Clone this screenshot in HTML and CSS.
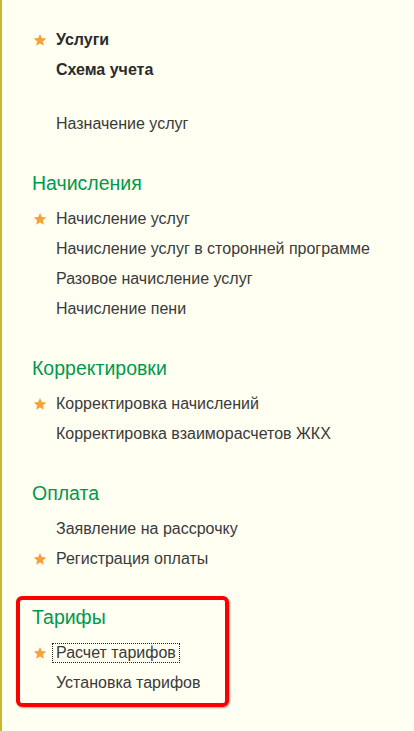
FILE: index.html
```html
<!DOCTYPE html>
<html lang="ru">
  <head>
    <meta charset="UTF-8" />
    <meta name="viewport" content="width=device-width, initial-scale=1.0" />
    <title>Услуги</title>
    <link rel="stylesheet" href="styles.css">
  </head>
  <body>
    <div class="panel">
      <section class="group group_top">
        <ul class="cmd_list">
          <li class="cmd fav bold"><span class="star"></span>Услуги</li>
          <li class="cmd bold">Схема учета</li>
        </ul>
        <ul class="cmd_list sub">
          <li class="cmd">Назначение услуг</li>
        </ul>
      </section>

      <section class="group">
        <h2 class="group_title">Начисления</h2>
        <ul class="cmd_list">
          <li class="cmd fav"><span class="star"></span>Начисление услуг</li>
          <li class="cmd">Начисление услуг в сторонней программе</li>
          <li class="cmd">Разовое начисление услуг</li>
          <li class="cmd">Начисление пени</li>
        </ul>
      </section>

      <section class="group">
        <h2 class="group_title">Корректировки</h2>
        <ul class="cmd_list">
          <li class="cmd fav"><span class="star"></span>Корректировка начислений</li>
          <li class="cmd">Корректировка взаиморасчетов ЖКХ</li>
        </ul>
      </section>

      <section class="group">
        <h2 class="group_title">Оплата</h2>
        <ul class="cmd_list">
          <li class="cmd">Заявление на рассрочку</li>
          <li class="cmd fav"><span class="star"></span>Регистрация оплаты</li>
        </ul>
      </section>

      <section class="group marked">
        <h2 class="group_title">Тарифы</h2>
        <ul class="cmd_list">
          <li class="cmd fav"><span class="star"></span><span class="focused">Расчет тарифов</span></li>
          <li class="cmd">Установка тарифов</li>
        </ul>
      </section>
    </div>

    <script>
      // звёздочка избранного одна на все пункты
      let star_svg =
        '<svg viewBox="0 0 24 24" width="14" height="14"><path d="M12 1.5l3.1 7.1 7.6.7-5.8 5.1 1.8 7.6L12 18l-6.7 4 1.8-7.6-5.8-5.1 7.6-.7z" fill="#f7a238"/></svg>';
      let all_stars = document.getElementsByClassName("star");
      for (let i = 0; i < all_stars.length; i++) {
        all_stars[i].innerHTML = star_svg;
      }
    </script>
  </body>
</html>
```

FILE: styles.css
```css
* {
  box-sizing: border-box;
}
html,
body {
  margin: 0;
  height: 100%;
  background-color: #fffff2;
}
body {
  font-family: "Liberation Sans", Arial, sans-serif;
  font-size: 16px;
  color: #3a3a3a;
}
div.panel {
  min-height: 100%;
  border-left: 2px solid #cbb733;
  padding: 25px 0 0 30px;
}
ul.cmd_list {
  margin: 0;
  padding: 0;
  list-style: none;
}
ul.cmd_list.sub {
  margin-top: 24px;
}
li.cmd {
  display: flex;
  align-items: center;
  height: 30px;
  padding-left: 24px;
}
li.cmd.fav {
  padding-left: 0;
}
li.cmd.bold {
  font-weight: bold;
  color: #2b2b2b;
}
span.star {
  display: flex;
  width: 24px;
  padding-left: 1px;
}
span.focused {
  border: 1px dotted #222;
  padding: 0 3px;
  margin-left: -4px;
  line-height: 18px;
}
section.group {
  margin-top: 32px;
}
section.group_top {
  margin-top: 0;
}
h2.group_title {
  margin: 0 0 9px 0;
  font-size: 19.5px;
  font-weight: normal;
  line-height: 24px;
  color: #00994c;
}
section.marked {
  margin-top: 22px;
  margin-left: -16px;
  width: 213px;
  border: 4px solid #fa0000;
  border-radius: 6px;
  padding: 5px 0 5px 12px;
  box-shadow: 1px 1px 2px rgba(0, 0, 0, 0.35);
}
```
